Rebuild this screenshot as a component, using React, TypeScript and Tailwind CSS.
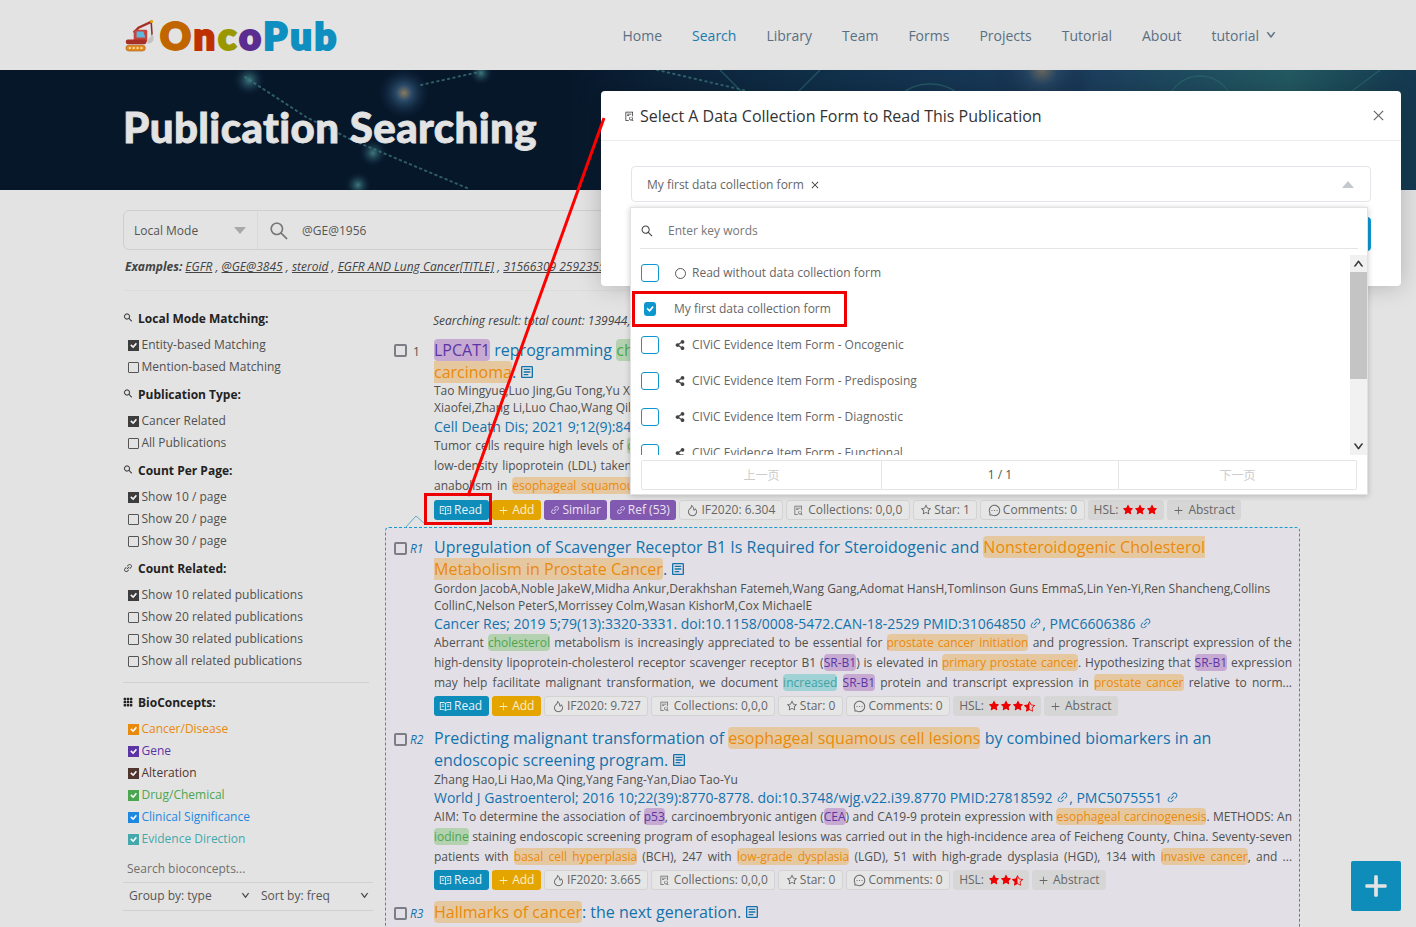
import type { ReactNode } from 'react';
import {
  AiFillStar,
  AiOutlineClose,
  AiOutlineDown,
  AiOutlineFileSearch,
  AiOutlineFire,
  AiOutlineLink,
  AiOutlineMessage,
  AiOutlinePlus,
  AiOutlineRead,
  AiOutlineSearch,
  AiOutlineStar,
  AiOutlineUp,
} from 'react-icons/ai';
import { BsCheck, BsGrid3X3GapFill, BsStarHalf } from 'react-icons/bs';
import { FaShareAlt } from 'react-icons/fa';
import { MdOutlineArticle } from 'react-icons/md';

const NAV = ['Home', 'Search', 'Library', 'Team', 'Forms', 'Projects', 'Tutorial', 'About'];

// highlight colours for the bioconcept spans
const H = {
  d: 'bg-[#e6c8a0] text-[#e98a0c]',
  g: 'bg-[#c6aad2] text-[#5c35a5]',
  c: 'bg-[#b4d2b0] text-[#4ca64f]',
  e: 'bg-[#a0d2d6] text-[#3fa3a5]',
};

function Hl({ t, children }: { t: keyof typeof H; children: ReactNode }) {
  return <span className={`${H[t]} rounded-[4px] [box-decoration-break:slice]`}>{children}</span>;
}

function Check({ on, color = 'bg-[#3d3d3d]' }: { on?: boolean; color?: string }) {
  return on ? (
    <span className={`${color} w-[11px] h-[11px] flex items-center justify-center text-white shrink-0`}>
      <BsCheck size={13} strokeWidth={1} />
    </span>
  ) : (
    <span className="w-[11px] h-[11px] border border-[#555] rounded-[1px] shrink-0" />
  );
}

function Opt({ label, on, color, text }: { label: string; on?: boolean; color?: string; text?: string }) {
  return (
    <div className={`h-[22px] pl-[5px] flex items-center gap-[2.5px] text-[12px] ${text ?? 'text-[#505050]'}`}>
      <Check on={on} color={color} />
      <span>{label}</span>
    </div>
  );
}

function SideHead({ icon, label, mt = 'mt-[6px]' }: { icon: ReactNode; label: string; mt?: string }) {
  return (
    <div className={`h-[22px] mb-[4px] flex items-center gap-[5px] text-[12px] font-bold text-[#222] ${mt}`}>
      <span className="w-[10px] flex justify-center -mt-[3px]">{icon}</span>
      {label}
    </div>
  );
}

function Btn({ className, children }: { className: string; children: ReactNode }) {
  return (
    <span className={`h-5 rounded-[3px] flex items-center gap-[2px] whitespace-nowrap ${className}`}>
      {children}
    </span>
  );
}

const grayBtn = 'px-[6.5px] border border-[#d3d3d3] bg-[#e6e6e6] text-[#666]';
const darkBtn = 'px-[6px] bg-[#d6d6d6] text-[#666]';
const purpleBtn = 'px-[6px] bg-[#8159b0] text-[#ece4f4]';

function Stars({ full, half }: { full: number; half?: boolean }) {
  return (
    <span className="flex text-[#ee0000] ml-[2px]">
      {Array.from({ length: full }).map((_, i) => (
        <AiFillStar key={i} size={12} />
      ))}
      {half && <BsStarHalf size={11} className="mt-[0.5px]" />}
    </span>
  );
}

function Actions({ impact, star, full, half, refs }: { impact: string; star: number; full: number; half?: boolean; refs?: boolean }) {
  return (
    <div className="flex gap-[3px] text-[12px]">
      <Btn className="bg-[#0e8cba] text-[#e8f3f8] pl-[5px] pr-[7px]">
        <AiOutlineRead size={13} /> Read
      </Btn>
      <Btn className="bg-[#e5a500] text-[#fbeecb] pl-[6px] pr-[7px]">
        <AiOutlinePlus size={11} className="mr-[1px]" /> Add
      </Btn>
      {refs && (
        <>
          <Btn className={purpleBtn}>
            <AiOutlineLink size={10} /> Similar
          </Btn>
          <Btn className={purpleBtn}>
            <AiOutlineLink size={10} /> Ref (53)
          </Btn>
        </>
      )}
      <Btn className={grayBtn}>
        <AiOutlineFire size={13} /> IF2020: {impact}
      </Btn>
      <Btn className={grayBtn}>
        <AiOutlineFileSearch size={11} className="mr-[2px]" /> Collections: 0,0,0
      </Btn>
      <Btn className={grayBtn}>
        <AiOutlineStar size={12} /> Star: {star}
      </Btn>
      <Btn className={grayBtn}>
        <AiOutlineMessage size={13} /> Comments: 0
      </Btn>
      <Btn className={darkBtn}>
        HSL: <Stars full={full} half={half} />
      </Btn>
      <Btn className={darkBtn}>
        <AiOutlinePlus size={11} className="mr-[2px]" /> Abstract
      </Btn>
    </div>
  );
}

function Title({ children }: { children: ReactNode }) {
  return (
    <div className="text-[16px] leading-[22px] text-[#1272ac]">
      {children}
      <MdOutlineArticle size={16} className="inline ml-[3px] -mt-[3px]" />
    </div>
  );
}

function Journal({ children }: { children: ReactNode }) {
  return <div className="text-[14px] leading-[18px] h-[18px] mt-[1px] text-[#1272ac] whitespace-nowrap">{children}</div>;
}

function Line({ children }: { children: ReactNode }) {
  return (
    <div className="text-[12px] leading-[20px] h-[20px] overflow-hidden text-[#505050] text-justify [text-align-last:justify]">
      {children}
    </div>
  );
}

function Rel({ n, children }: { n: string; children: ReactNode }) {
  return (
    <div className="flex">
      <div className="w-[48px] shrink-0 pl-[8px] pt-[5px] flex items-start gap-[3px]">
        <span className="w-[13px] h-[13px] border-2 border-[#7d7d85] rounded-[2px] mt-[1px]" />
        <span className="text-[12px] italic text-[#1272ac] leading-[15px]">{n}</span>
      </div>
      <div className="w-[858px]">{children}</div>
    </div>
  );
}

function Banner() {
  return (
    <svg viewBox="0 0 1416 120" preserveAspectRatio="none" className="absolute inset-0 w-full h-full">
      <defs>
        <radialGradient id="glow">
          <stop offset="0" stopColor="#8a7a60" />
          <stop offset="0.3" stopColor="#2a4a68" />
          <stop offset="1" stopColor="#0a2038" stopOpacity="0" />
        </radialGradient>
        <radialGradient id="dot">
          <stop offset="0" stopColor="#3f7a80" />
          <stop offset="1" stopColor="#0a2038" stopOpacity="0" />
        </radialGradient>
        <linearGradient id="right" x1="0" x2="1" y1="0" y2="0">
          <stop offset="0" stopColor="#07172a" />
          <stop offset="0.1" stopColor="#0c2238" />
          <stop offset="0.3" stopColor="#10304a" />
          <stop offset="0.6" stopColor="#1b3d5e" />
          <stop offset="0.85" stopColor="#235a62" />
          <stop offset="1" stopColor="#143850" />
        </linearGradient>
      </defs>
      <rect x="570" width="846" height="120" fill="url(#right)" />
      <circle cx="404" cy="23" r="26" fill="url(#glow)" />
      <circle cx="249" cy="10" r="16" fill="url(#dot)" />
      <circle cx="373" cy="83" r="14" fill="url(#dot)" />
      <circle cx="358" cy="115" r="13" fill="url(#dot)" />
      <circle cx="481" cy="3" r="12" fill="url(#dot)" />
      <circle cx="1042" cy="0" r="50" fill="url(#glow)" opacity="0.7" />
      <g fill="none" stroke="#3f7a80" strokeWidth="2" strokeDasharray="1.5 4" strokeLinecap="round" opacity="0.7">
        <path d="M245 7L306 47L352 70L467 118" />
        <path d="M421 15L479 2" />
        <path d="M657 0L747 21" />
      </g>
      <g fill="none" stroke="#2c6a6e" strokeWidth="1.4" opacity="0.7">
        <circle cx="1200" cy="40" r="34" />
        <circle cx="930" cy="60" r="46" />
        <path d="M720 0L780 60M820 0L760 60M1380 0L1340 30" />
      </g>
    </svg>
  );
}

function Excavator() {
  return (
    <svg viewBox="0 0 30 34" className="w-[33px] h-[33px] shrink-0">
      <path d="M9 14L14 9L27 3" fill="none" stroke="#a63028" strokeWidth="2.4" />
      <path d="M27 2L28 17" stroke="#8a2a20" strokeWidth="1.6" />
      <circle cx="27.5" cy="2.5" r="1.6" fill="#e5a500" />
      <path d="M24 21L29 15L29.5 22Q27 26 23 25Z" fill="#c3c3c3" />
      <rect x="9" y="11" width="14" height="13" rx="1.5" fill="#c8443a" />
      <path d="M12 13H19L21 19H12Z" fill="#5cb8dc" />
      <rect x="1" y="21" width="21" height="5" rx="2" fill="#a63028" />
      <rect x="1" y="27" width="20" height="6" rx="3" fill="#e08a20" stroke="#a85c10" strokeWidth="0.6" />
      <g fill="#fce0a8">
        <circle cx="5" cy="30" r="1.2" />
        <circle cx="9" cy="30" r="1.2" />
        <circle cx="13" cy="30" r="1.2" />
        <circle cx="17" cy="30" r="1.2" />
      </g>
    </svg>
  );
}

const FORMS = [
  'CIViC Evidence Item Form - Oncogenic',
  'CIViC Evidence Item Form - Predisposing',
  'CIViC Evidence Item Form - Diagnostic',
  'CIViC Evidence Item Form - Functional',
];

function FormBox() {
  return <span className="w-[18px] h-[18px] border border-[#0e97cf] rounded-[3px] shrink-0" />;
}

function Dropdown() {
  return (
    <div className="absolute left-[630px] top-[207px] w-[738px] h-[288px] bg-white border border-[#e2e2e2] shadow-[0_1px_6px_rgba(0,0,0,0.2)] text-[12px] text-[#666] z-20">
      <div className="mx-[9px] mt-[1px] h-[40px] border-b border-[#e5e5e5] flex items-center pt-[4px]">
        <AiOutlineSearch size={14} className="text-[#444]" />
        <span className="ml-[14px] text-[#777]">Enter key words</span>
      </div>
      <div className="flex h-[200px] mt-[6px] overflow-hidden">
        <div className="w-[719px] pl-[10px] overflow-hidden">
          <div className="h-[36px] flex items-center">
            <FormBox />
            <span className="ml-[16px] w-[11px] h-[11px] rounded-full border border-[#555]" />
            <span className="ml-[6px]">Read without data collection form</span>
          </div>
          <div className="h-[36px] flex items-center">
            <span className="ml-[3px] w-[12px] h-[14px] rounded-[3px] bg-[#0e97cf] text-white flex items-center justify-center">
              <BsCheck size={14} strokeWidth={1} />
            </span>
            <span className="ml-[18px]">My first data collection form</span>
          </div>
          {FORMS.map((f) => (
            <div key={f} className="h-[36px] flex items-center">
              <FormBox />
              <FaShareAlt size={10} className="ml-[16px] text-[#444]" />
              <span className="ml-[7px]">{f}</span>
            </div>
          ))}
        </div>
        <div className="w-[17px] bg-[#f1f1f1] flex flex-col items-center">
          <AiOutlineUp size={11} strokeWidth={70} className="h-[17px] text-[#333] shrink-0" />
          <div className="w-full h-[107px] bg-[#c4c4c4]" />
          <AiOutlineDown size={11} strokeWidth={70} className="mt-auto h-[17px] text-[#333] shrink-0" />
        </div>
      </div>
      <div className="mx-[10px] mt-[5px] h-[30px] border border-[#e5e5e5] rounded-[2px] flex items-center text-center">
        <span className="w-[239px] h-full flex items-center justify-center text-[#ccc] [font-family:'Noto_Sans_CJK_SC',sans-serif]">上一页</span>
        <span className="w-[238px] h-full flex items-center justify-center border-x border-[#e5e5e5] text-[#555]">1 / 1</span>
        <span className="flex-1 h-full flex items-center justify-center text-[#ccc] [font-family:'Noto_Sans_CJK_SC',sans-serif]">下一页</span>
      </div>
    </div>
  );
}

function Modal() {
  return (
    <div className="absolute left-[601px] top-[91px] w-[800px] h-[195px] bg-white rounded-[4px] shadow-[0_0_24px_rgba(0,0,0,0.22)] z-10">
      <div className="h-[50px] border-b border-[#ececec] flex items-center pl-[23px] pr-[15px] text-[16px] text-[#333]">
        <AiOutlineFileSearch size={11} className="mr-[5px] mt-[2px]" />
        Select A Data Collection Form to Read This Publication
        <AiOutlineClose size={15} className="ml-auto text-[#666]" />
      </div>
      <div className="mx-[30px] mt-[25px] h-[36px] pt-[2px] border border-[#e2e5ea] rounded-[4px] flex items-center px-[15px] text-[12px] text-[#666]">
        My first data collection form
        <AiOutlineClose size={10} className="ml-[6px] text-[#333]" />
        <span className="ml-auto -mt-[2px] mr-[1px] w-0 h-0 border-x-[6px] border-x-transparent border-b-[7px] border-b-[#c5c8ce]" />
      </div>
      <div className="mx-[30px] mt-[15px] h-[34px] rounded-[4px] bg-[#0e97cf]" />
    </div>
  );
}

function Sidebar() {
  return (
    <aside className="w-[246px] shrink-0 pt-[17px]">
      <SideHead icon={<AiOutlineSearch size={11} className="text-[#222]" strokeWidth={15} />} label="Local Mode Matching:" mt="mt-0" />
      <Opt label="Entity-based Matching" on />
      <Opt label="Mention-based Matching" />
      <SideHead icon={<AiOutlineSearch size={11} className="text-[#222]" strokeWidth={15} />} label="Publication Type:" />
      <Opt label="Cancer Related" on />
      <Opt label="All Publications" />
      <SideHead icon={<AiOutlineSearch size={11} className="text-[#222]" strokeWidth={15} />} label="Count Per Page:" />
      <Opt label="Show 10 / page" on />
      <Opt label="Show 20 / page" />
      <Opt label="Show 30 / page" />
      <SideHead icon={<AiOutlineLink size={10} className="text-[#222]" />} label="Count Related:" />
      <Opt label="Show 10 related publications" on />
      <Opt label="Show 20 related publications" />
      <Opt label="Show 30 related publications" />
      <Opt label="Show all related publications" />
      <div className="mt-[10px] mb-[9px] border-t border-[#d0d0d0]" />
      <SideHead icon={<BsGrid3X3GapFill size={10} className="text-[#222]" />} label="BioConcepts:" mt="mt-0" />
      <Opt label="Cancer/Disease" on color="bg-[#e98a0c]" text="text-[#e98a0c]" />
      <Opt label="Gene" on color="bg-[#5c35a5]" text="text-[#5c35a5]" />
      <Opt label="Alteration" on color="bg-[#50352e]" text="text-[#50352e]" />
      <Opt label="Drug/Chemical" on color="bg-[#4ca64f]" text="text-[#4ca64f]" />
      <Opt label="Clinical Significance" on color="bg-[#1e88e0]" text="text-[#1e88e0]" />
      <Opt label="Evidence Direction" on color="bg-[#45a8aa]" text="text-[#45a8aa]" />
      <div className="h-[27px] mt-[6px] pl-[4px] flex items-center text-[12px] text-[#707070] border-b border-[#d0d0d0] w-[250px]">
        Search bioconcepts...
      </div>
      <div className="h-[28px] pb-[2px] flex items-center text-[12px] text-[#555] border-b border-[#d0d0d0] w-[250px]">
        <span className="w-[138px] pl-[6px] flex items-center">
          Group by: type
          <AiOutlineDown size={9} className="ml-auto mr-[11px] text-[#333]" strokeWidth={50} />
        </span>
        <span className="flex-1 flex items-center">
          Sort by: freq
          <AiOutlineDown size={9} className="ml-auto mr-[4px] text-[#333]" strokeWidth={50} />
        </span>
      </div>
    </aside>
  );
}

function LinkMark() {
  return <AiOutlineLink size={13} className="inline -mt-[4px]" />;
}

function Results() {
  return (
    <main className="w-[915px] ml-[16px] shrink-0">
      <div className="pl-[48px] pt-[21px] h-[48px] text-[12px] italic text-[#444]">Searching result: total count: 139944,</div>
      <div className="flex">
        <div className="w-[49px] shrink-0 pl-[9px] pt-[4px] flex items-start gap-[6px] text-[12px] text-[#555]">
          <span className="w-[13px] h-[13px] border-2 border-[#7d7d85] rounded-[2px] mt-[1px]" />
          <span>1</span>
        </div>
        <div className="w-[858px]">
          <Title>
            <Hl t="g">LPCAT1</Hl> reprogramming <Hl t="c">cholesterol</Hl> metabolism promotes the progression of <Hl t="d">esophageal squamous cell carcinoma</Hl>.
          </Title>
          <div className="text-[12px] leading-[17px] text-[#505050] -mt-[1px]">
            Tao Mingyue,Luo Jing,Gu Tong,Yu Xin,Chen Ying,Wang Lei,Li Wei,Zhou Ming,Xu Hong,Sun Yan,Liu Bo,Zhao Kun,Yang Jian,Wu Fang,Zhu Tao,Ma Yun
            <br />
            Xiaofei,Zhang Li,Luo Chao,Wang Qilong
          </div>
          <div className="pt-[1px]">
            <Journal>Cell Death Dis; 2021 9;12(9):845</Journal>
          </div>
          <div>
            <Line>
              Tumor cells require high levels of <Hl t="c">cholesterol</Hl> to support their rapid proliferation and survival, most of which is provided by the uptake of plasma lipids
            </Line>
            <Line>low-density lipoprotein (LDL) taken up through its receptor on the cell surface, and this process is closely tied to the lipid synthesis and the metabolic</Line>
            <Line>
              anabolism in <Hl t="d">esophageal squamous cell carcinoma</Hl> cells, although the precise mechanisms that control this remain to be fully established in human tumors
            </Line>
          </div>
          <div className="mt-[4px]">
            <Actions impact="6.304" star={1} full={3} refs />
          </div>
        </div>
      </div>
      <svg viewBox="0 0 20 12" className="w-[20px] h-[12px] ml-[20px] mt-[-4px] mb-[-1px]">
        <path d="M0 12L11 0L20 8" fill="none" stroke="#5fa8c8" strokeWidth="1" />
      </svg>
      <div className="border border-dashed border-[#1a9bd0] rounded-[4px] bg-[#e2e0e6] h-[600px] pt-[8px]">
        <Rel n="R1">
          <Title>
            Upregulation of Scavenger Receptor B1 Is Required for Steroidogenic and <Hl t="d">Nonsteroidogenic Cholesterol Metabolism in Prostate Cancer</Hl>.
          </Title>
          <div className="text-[12px] leading-[17px] text-[#505050]">
            Gordon JacobA,Noble JakeW,Midha Ankur,Derakhshan Fatemeh,Wang Gang,Adomat HansH,Tomlinson Guns EmmaS,Lin Yen-Yi,Ren Shancheng,Collins CollinC,Nelson PeterS,Morrissey Colm,Wasan KishorM,Cox MichaelE
          </div>
          <Journal>
            Cancer Res; 2019 5;79(13):3320-3331. doi:10.1158/0008-5472.CAN-18-2529 PMID:31064850 <LinkMark />, PMC6606386 <LinkMark />
          </Journal>
          <div>
            <Line>
              Aberrant <Hl t="c">cholesterol</Hl> metabolism is increasingly appreciated to be essential for <Hl t="d">prostate cancer initiation</Hl> and progression. Transcript expression of the
            </Line>
            <Line>
              high-density lipoprotein-cholesterol receptor scavenger receptor B1 (<Hl t="g">SR-B1</Hl>) is elevated in <Hl t="d">primary prostate cancer</Hl>. Hypothesizing that <Hl t="g">SR-B1</Hl> expression
            </Line>
            <Line>
              may help facilitate malignant transformation, we document <Hl t="e">increased</Hl> <Hl t="g">SR-B1</Hl> protein and transcript expression in <Hl t="d">prostate cancer</Hl> relative to norm...
            </Line>
          </div>
          <div className="mt-[3px] mb-[11px]">
            <Actions impact="9.727" star={0} full={3} half />
          </div>
        </Rel>
        <Rel n="R2">
          <Title>
            Predicting malignant transformation of <Hl t="d">esophageal squamous cell lesions</Hl> by combined biomarkers in an endoscopic screening program.
          </Title>
          <div className="text-[12px] leading-[17px] text-[#505050]">Zhang Hao,Li Hao,Ma Qing,Yang Fang-Yan,Diao Tao-Yu</div>
          <Journal>
            World J Gastroenterol; 2016 10;22(39):8770-8778. doi:10.3748/wjg.v22.i39.8770 PMID:27818592 <LinkMark />, PMC5075551 <LinkMark />
          </Journal>
          <div>
            <Line>
              AIM: To determine the association of <Hl t="g">p53</Hl>, carcinoembryonic antigen (<Hl t="g">CEA</Hl>) and CA19-9 protein expression with <Hl t="d">esophageal carcinogenesis</Hl>. METHODS: An
            </Line>
            <Line>
              <Hl t="c">iodine</Hl> staining endoscopic screening program of esophageal lesions was carried out in the high-incidence area of Feicheng County, China. Seventy-seven
            </Line>
            <Line>
              patients with <Hl t="d">basal cell hyperplasia</Hl> (BCH), 247 with <Hl t="d">low-grade dysplasia</Hl> (LGD), 51 with high-grade dysplasia (HGD), 134 with <Hl t="d">invasive cancer</Hl>, and ...
            </Line>
          </div>
          <div className="mt-[3px] mb-[11px]">
            <Actions impact="3.665" star={0} full={2} half />
          </div>
        </Rel>
        <Rel n="R3">
          <Title>
            <Hl t="d">Hallmarks of cancer</Hl>: the next generation.
          </Title>
        </Rel>
      </div>
    </main>
  );
}

export default function App() {
  return (
    <div className="relative h-[927px] overflow-hidden bg-[#e3e3e3] [font-family:'Open_Sans',sans-serif]">
      <header className="h-[70px] px-[123px] flex items-center">
        <Excavator />
        <span className="ml-[4px] text-[38px] font-[800] tracking-[2.8px] [-webkit-text-stroke:2px_currentColor] [font-family:Lato,sans-serif]">
          <span className="text-[#c06500]">O</span>
          <span className="text-[#bf3000]">n</span>
          <span className="text-[#9a9800]">c</span>
          <span className="text-[#5b2d90]">o</span>
          <span className="text-[#0e8fc0]">Pub</span>
        </span>
        <nav className="ml-auto pr-[17px] flex items-center gap-[30px] text-[14px] text-[#5a7082]">
          {NAV.map((n) => (
            <span key={n} className={n === 'Search' ? 'text-[#1a7ab0]' : ''}>
              {n}
            </span>
          ))}
          <span className="flex items-center gap-[7px]">
            tutorial <AiOutlineDown size={10} strokeWidth={90} />
          </span>
        </nav>
      </header>

      <div className="relative h-[120px] bg-[#07172a] px-[123px] flex items-center overflow-hidden">
        <Banner />
        <h1 className="relative pb-[6px] text-[42px] font-black tracking-[0.4px] [-webkit-text-stroke:0.8px_currentColor] text-[#e3e3e3] [font-family:Lato,sans-serif]">
          Publication Searching
        </h1>
      </div>

      <div className="px-[123px] pt-[20px]">
        <div className="h-[40px] pt-[1px] border border-[#cfcfcf] rounded-[6px] flex items-center text-[12px] text-[#555]">
          <span className="w-[134px] h-full px-[10px] flex items-center border-r border-[#d8d8d8]">
            Local Mode
            <span className="ml-auto mr-[1px] w-0 h-0 border-x-[6px] border-x-transparent border-t-[7px] border-t-[#a8a8a8]" />
          </span>
          <AiOutlineSearch size={22} className="ml-[10px] text-[#777]" />
          <span className="ml-[12px]">@GE@1956</span>
        </div>
        <div className="mt-[8px] ml-[2px] h-[17px] text-[12px] italic text-[#444] whitespace-nowrap">
          <b className="mr-[3px]">Examples:</b>
          <u>EGFR</u> , <u>@GE@3845</u> , <u>steroid</u> , <u>EGFR AND Lung Cancer[TITLE]</u> , <u>31566309 25923550</u>
        </div>
        <div className="mt-[15px] border-t border-[#dcdcdc]" />
        <div className="flex">
          <Sidebar />
          <Results />
        </div>
      </div>

      <Modal />
      <Dropdown />

      {/* red annotations on top of the screenshot */}
      <svg className="absolute left-0 top-0 w-[1416px] h-[927px] z-30 pointer-events-none">
        <path d="M468 496L604 118" stroke="#ff0000" strokeWidth="3" />
      </svg>
      <div className="absolute left-[424px] top-[493px] w-[68px] h-[32px] border-[3px] border-[#ee0000] z-30" />
      <div className="absolute left-[632px] top-[291px] w-[215px] h-[36px] border-[3px] border-[#ee0000] z-30" />

      <div className="absolute left-[1351px] top-[861px] w-[50px] h-[50px] rounded-[2px] bg-[#0e8cba] flex items-center justify-center text-[#e3e3e3] z-30">
        <AiOutlinePlus size={28} strokeWidth={60} />
      </div>
    </div>
  );
}
